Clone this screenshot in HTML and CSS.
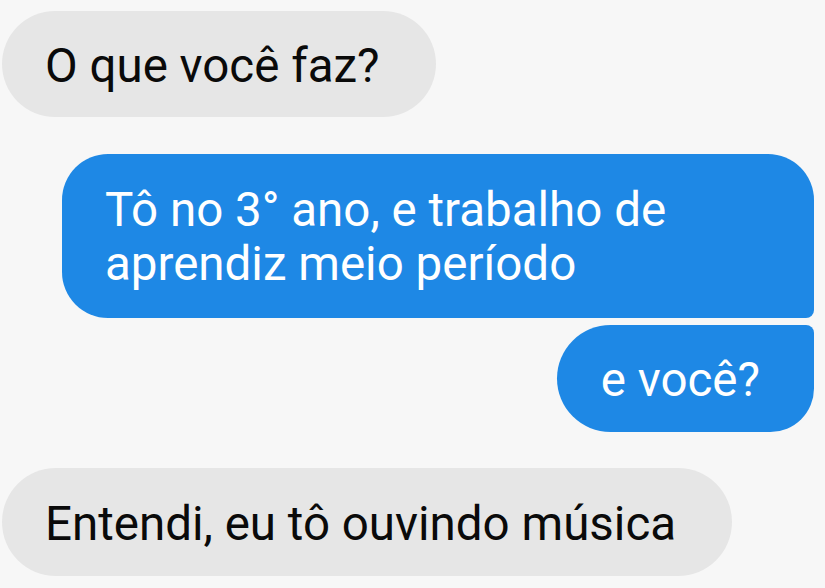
FILE: index.html
```html
<!DOCTYPE html>
<html lang="pt">
<head>
<meta charset="utf-8">
<title>Chat</title>
<link rel="stylesheet" href="styles.css">
</head>
<body>
<div class="chat">
  <div class="msg in first">O que você faz?</div>
  <div class="msg out out-top">Tô no 3° ano, e trabalho de aprendiz meio período</div>
  <div class="msg out out-bottom">e você?</div>
  <div class="msg in last">Entendi, eu tô ouvindo música</div>
</div>
</body>
</html>
```

FILE: styles.css
```css
html, body {
  margin: 0;
  padding: 0;
  background: #f7f7f7;
}
body {
  width: 825px;
  height: 588px;
  overflow: hidden;
  font-family: Roboto, "Noto Sans", sans-serif;
}
.chat {
  display: flex;
  flex-direction: column;
  padding: 11px 11px 0 2px;
}
.msg {
  font-size: 47.5px;
  line-height: 54px;
  padding: 28px 56px 24px 43px;
  box-sizing: border-box;
}
.in {
  align-self: flex-start;
  background: #e6e6e6;
  color: #0a0a0a;
  border-radius: 54px;
}
.out {
  align-self: flex-end;
  background: #1e88e5;
  color: #ffffff;
}
.out-top {
  max-width: 752px;
  margin-top: 37px;
  padding-top: 29px;
  padding-bottom: 27px;
  border-radius: 46px 46px 8px 46px;
}
.out-bottom {
  margin-top: 7px;
  padding: 28px 54px 25px 44px;
  border-radius: 54px 8px 44px 54px;
}
.last {
  margin-top: 36px;
  padding-top: 29px;
  padding-bottom: 25px;
}
```
